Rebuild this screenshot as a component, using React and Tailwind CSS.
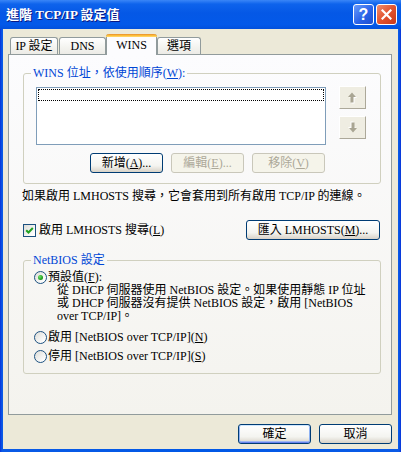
import React from 'react';

function Btn({ children, className = '', disabled = false, isDefault = false }) {
  return (
    <button
      type="button"
      className={`flex h-[20px] items-center justify-center rounded-[3px] border text-[12px] leading-[14px] ${
        disabled
          ? 'border-[#C9C7BA] bg-[#F5F4EA] text-[#ACA899]'
          : 'border-[#003C74] bg-[linear-gradient(to_bottom,#FFFFFF_0%,#F4F4F0_65%,#D8D2C7_100%)] text-black'
      } ${
        isDefault
          ? 'shadow-[inset_0_1px_0_#CEE7FF,inset_1px_0_0_#8FB2F2,inset_-1px_0_0_#8FB2F2,inset_0_-1px_0_#6982EE,inset_0_-2px_0_#9EB9F3]'
          : ''
      } ${className}`}
    >
      {children}
    </button>
  );
}

function ArrowBtn({ down = false }) {
  return (
    <div className="flex h-[23px] w-[27px] items-center justify-center border border-t-white border-l-white border-b-[#ACA899] border-r-[#ACA899] bg-[#EFEDE2]">
      <svg width="11" height="13" viewBox="0 0 11 13" className={down ? 'rotate-180' : ''}>
        <path d="M1 6 L5 1.5 L9 6 H6.5 V11.5 H3.5 V6 Z" fill="#FFFFFF" transform="translate(1 1)" />
        <path d="M1 6 L5 1.5 L9 6 H6.5 V11.5 H3.5 V6 Z" fill="#A9A593" />
      </svg>
    </div>
  );
}

function Radio({ checked = false }) {
  return (
    <span className="flex h-[13px] w-[13px] shrink-0 items-center justify-center rounded-full border border-[#1C5180] bg-[linear-gradient(135deg,#DCDCD7_0%,#FFFFFF_85%)]">
      {checked && (
        <span className="h-[5px] w-[5px] rounded-full bg-[radial-gradient(circle_at_35%_35%,#6FE36B_0%,#21A121_60%,#0E7A0E_100%)]" />
      )}
    </span>
  );
}

export default function App() {
  return (
    <div className="flex h-[452px] w-[401px] flex-col overflow-hidden bg-[linear-gradient(to_right,#0831D9_0px,#0A5AE6_2px,#0058E6_50%,#0A5AE6_calc(100%-2px),#0831D9_100%)] font-['Liberation_Serif','Noto_Sans_CJK_TC',serif] text-[12px] text-black">
      {/* title bar */}
      <div className="flex h-[29px] shrink-0 items-center bg-[linear-gradient(to_bottom,#3A86F7_0%,#0E63EC_14%,#0558E6_45%,#0359E9_85%,#0250DC_100%)] pl-[6px] pr-[4px]">
        <span className="flex-1 text-[13px] font-bold leading-[16px] text-white [text-shadow:1px_1px_0_#0A1883]">
          進階 TCP/IP 設定值
        </span>
        <div className="flex gap-[2px]">
          <div className="flex h-[21px] w-[21px] items-center justify-center rounded-[3px] border border-white bg-[linear-gradient(135deg,#6A9BFB_0%,#2A63E8_55%,#1E4FD0_100%)]">
            <span className="font-['Liberation_Sans',sans-serif] text-[16px] font-bold leading-none text-white">?</span>
          </div>
          <div className="flex h-[21px] w-[21px] items-center justify-center rounded-[3px] border border-white bg-[linear-gradient(135deg,#F08E6E_0%,#E2532F_50%,#C8381A_100%)]">
            <svg width="11" height="11" viewBox="0 0 11 11">
              <path d="M1.5 1.5 L9.5 9.5 M9.5 1.5 L1.5 9.5" stroke="#FFFFFF" strokeWidth="2.2" strokeLinecap="square" />
            </svg>
          </div>
        </div>
      </div>

      {/* body */}
      <div className="mx-[3px] mb-[3px] flex flex-1 flex-col bg-[#ECE9D8] pl-[5px] pr-[6px] pt-[5px]">
        {/* tabs */}
        <div className="flex h-[20px] items-end pl-[2px]">
          <div className="flex h-[17px] w-[48px] items-center justify-center rounded-t-[3px] border border-b-0 border-[#919B9C] bg-[linear-gradient(to_bottom,#FFFFFF_0%,#F3F3EF_60%,#ECEBE6_100%)] leading-[14px]">
            IP 設定
          </div>
          <div className="ml-[1px] flex h-[17px] w-[47px] items-center justify-center rounded-t-[3px] border border-b-0 border-[#919B9C] bg-[linear-gradient(to_bottom,#FFFFFF_0%,#F3F3EF_60%,#ECEBE6_100%)] leading-[14px]">
            DNS
          </div>
          <div className="relative z-10 -mb-px flex h-[21px] w-[51px] flex-col rounded-t-[3px] border-x border-[#919B9C] bg-[#FCFCFE]">
            <div className="-mx-px h-[3px] rounded-t-[3px] bg-[linear-gradient(to_bottom,#E68B2C_0%,#FFC73C_60%,#FFD97A_100%)]" />
            <div className="flex flex-1 items-center justify-center pb-[2px] leading-[14px]">WINS</div>
          </div>
          <div className="flex h-[17px] w-[44px] items-center justify-center rounded-t-[3px] border border-b-0 border-[#919B9C] bg-[linear-gradient(to_bottom,#FFFFFF_0%,#F3F3EF_60%,#ECEBE6_100%)] leading-[14px]">
            選項
          </div>
        </div>

        {/* tab panel */}
        <div className="flex h-[361px] w-[384px] flex-col border border-[#919B9C] bg-[linear-gradient(to_bottom,#FCFCFE_0%,#F4F3EE_100%)] px-[14px]">
          <fieldset className="mt-[11px] w-[358px] rounded-[3px] border border-[#D0D0BF]">
            <legend className="ml-[7px] px-[2px] leading-[14px] text-[#0046D5]">
              WINS 位址，依使用順序(<u>W</u>):
            </legend>
            <div className="pb-[10px] pl-[12px] pt-[7px]">
              <div className="flex">
                <div className="h-[58px] w-[290px] border border-[#7F9DB9] bg-white p-px">
                  <div className="h-[12px] border border-dotted border-black" />
                </div>
                <div className="-mt-px ml-[13px] flex flex-col gap-[7px]">
                  <ArrowBtn />
                  <ArrowBtn down />
                </div>
              </div>
              <div className="mt-[8px] flex gap-[8px] pl-[54px]">
                <Btn className="w-[73px]">
                  新增(<u>A</u>)...
                </Btn>
                <Btn className="w-[73px]" disabled>
                  編輯(<u>E</u>)...
                </Btn>
                <Btn className="w-[73px]" disabled>
                  移除(<u>V</u>)
                </Btn>
              </div>
            </div>
          </fieldset>

          <p className="-ml-px mt-[5px] leading-[14px]">如果啟用 LMHOSTS 搜尋，它會套用到所有啟用 TCP/IP 的連線。</p>

          <div className="mt-[17px] flex h-[20px] w-[357px] items-center justify-between">
            <div className="flex items-center gap-[3px]">
              <span className="flex h-[13px] w-[13px] items-center justify-center border border-[#1C5180] bg-[linear-gradient(135deg,#DCDCD7_0%,#FFFFFF_85%)]">
                <svg width="9" height="9" viewBox="0 0 9 9">
                  <path d="M1.2 4.2 L3.5 6.5 L7.8 2" stroke="#21A121" strokeWidth="2" fill="none" />
                </svg>
              </span>
              <span className="leading-[14px]">
                啟用 LMHOSTS 搜尋(<u>L</u>)
              </span>
            </div>
            <Btn className="w-[134px]">
              匯入 LMHOSTS(<u>M</u>)...
            </Btn>
          </div>

          <fieldset className="mt-[13px] w-[358px] rounded-[3px] border border-[#D0D0BF]">
            <legend className="ml-[7px] px-[2px] leading-[14px] text-[#0046D5]">NetBIOS 設定</legend>
            <div className="pb-[10px] pl-[10px] pt-[3px]">
              <div className="flex h-[14px] items-center gap-[1px]">
                <Radio checked />
                <span className="leading-[14px]">
                  預設值(<u>F</u>):
                </span>
              </div>
              <div className="pl-[23px] leading-[13px]">
                從 DHCP 伺服器使用 NetBIOS 設定。如果使用靜態 IP 位址
                <br />
                或 DHCP 伺服器沒有提供 NetBIOS 設定，啟用 [NetBIOS
                <br />
                over TCP/IP]。
              </div>
              <div className="mt-[7px] flex h-[14px] items-center gap-[1px]">
                <Radio />
                <span className="leading-[14px]">
                  啟用 [NetBIOS over TCP/IP](<u>N</u>)
                </span>
              </div>
              <div className="mt-[5px] flex h-[14px] items-center gap-[1px]">
                <Radio />
                <span className="leading-[14px]">
                  停用 [NetBIOS over TCP/IP](<u>S</u>)
                </span>
              </div>
            </div>
          </fieldset>
        </div>

        {/* dialog buttons */}
        <div className="mt-[9px] flex justify-end gap-[8px]">
          <Btn className="w-[73px]" isDefault>
            確定
          </Btn>
          <Btn className="w-[73px]">取消</Btn>
        </div>
      </div>
    </div>
  );
}
